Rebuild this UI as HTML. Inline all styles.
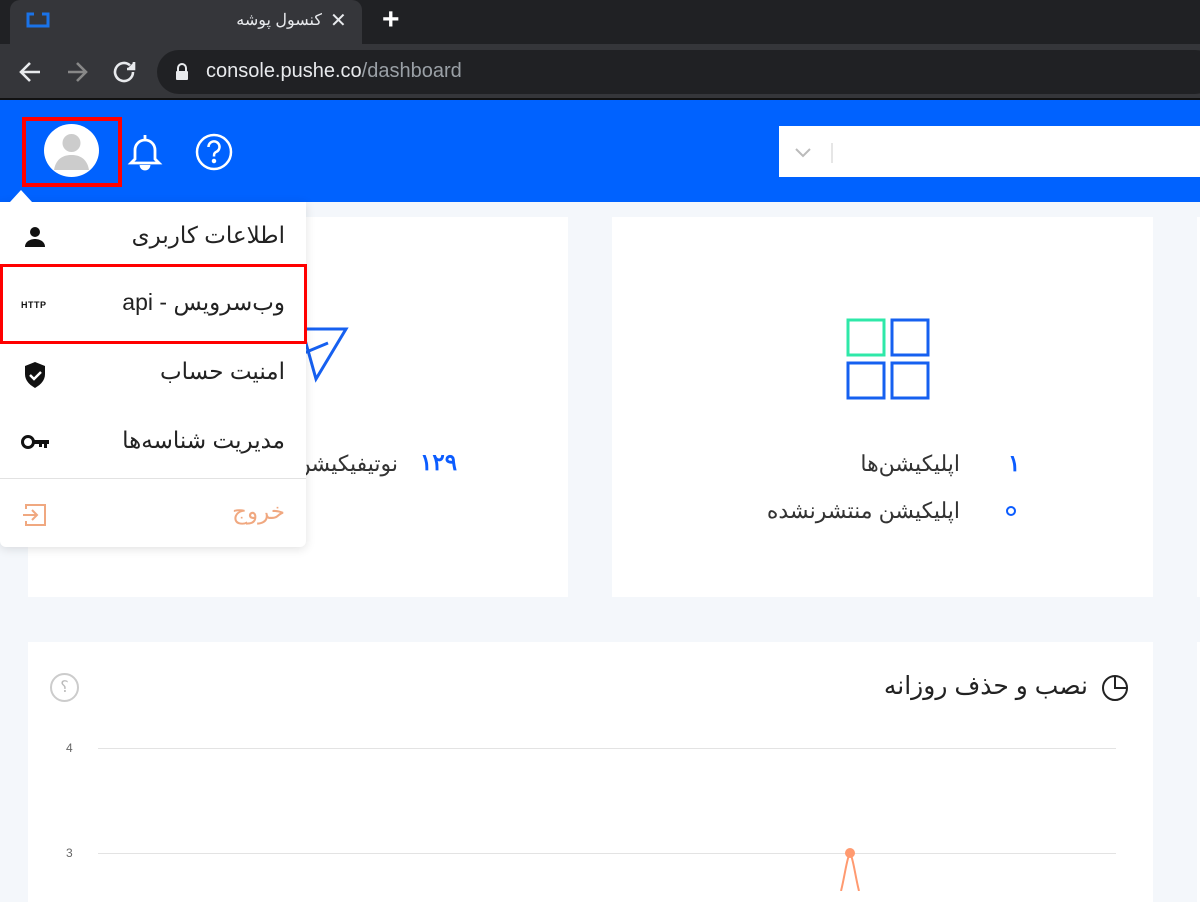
<!DOCTYPE html>
<html><head><meta charset="utf-8"><style>
*{margin:0;padding:0;box-sizing:border-box}
body{width:1200px;height:891px;overflow:hidden;background:#f4f7fb;font-family:"Liberation Sans","Noto Sans CJK SC",sans-serif;position:relative}
.abs{position:absolute}
.fa{font-family:"Liberation Sans","Noto Sans CJK SC",sans-serif;direction:rtl;white-space:nowrap}
</style></head><body>
<div class="abs" style="left:0;top:0;width:1200px;height:44px;background:#202124"></div>
<div class="abs" style="left:10px;top:0;width:352px;height:44px;background:#35363a;border-radius:10px 10px 0 0"></div>
<svg class="abs" style="left:26px;top:12px" width="24" height="16"><rect x="2" y="2" width="20" height="12" fill="none" stroke="#1a73e8" stroke-width="3"/><rect x="8" y="0" width="8" height="4" fill="#35363a"/></svg>
<div class="abs fa" style="left:200px;top:10px;width:122px;text-align:right;color:#e8eaed;font-size:16px">کنسول پوشه</div>
<div class="abs" style="left:330px;top:8px;color:#e8eaed;font-size:20px">✕</div>
<div class="abs" style="left:382px;top:3px;color:#fff;font-size:30px;font-weight:bold">+</div>
<div class="abs" style="left:0;top:44px;width:1200px;height:55px;background:#35363a"></div>
<div class="abs" style="left:0;top:98px;width:1200px;height:2px;background:#111"></div>
<svg class="abs" style="left:18px;top:60px" width="120" height="24" fill="none" stroke-width="2.6"><path d="M22 12H4M12 3L3 12l9 9" stroke="#e8eaed"/><path d="M68 12H50M59 3l9 9-9 9" stroke="#888"/><path d="M115 12a9 9 0 1 1-3-6.7" stroke="#e8eaed"/><path d="M116 2v7h-7" stroke="#e8eaed" fill="#e8eaed"/></svg>
<div class="abs" style="left:157px;top:50px;width:1060px;height:44px;background:#202124;border-radius:22px"></div>
<svg class="abs" style="left:175px;top:63px" width="14" height="18"><path d="M3 8V5a4 4 0 0 1 8 0v3" fill="none" stroke="#e8eaed" stroke-width="2"/><rect x="1" y="8" width="12" height="9" fill="#e8eaed" rx="1"/></svg>
<div class="abs" style="left:206px;top:60px;font-size:20px;color:#e8eaed">console.pushe.co<span style="color:#9aa0a6">/dashboard</span></div>
<div class="abs" style="left:0;top:100px;width:1200px;height:102px;background:#0062ff"></div>
<div class="abs" style="left:779px;top:126px;width:421px;height:51px;background:#fff"></div>
<svg class="abs" style="left:794px;top:143px" width="40" height="20"><path d="M2 6l7 7 7-7" fill="none" stroke="#bbb" stroke-width="2"/><path d="M38 0v20" stroke="#ccc"/></svg>
<div class="abs" style="left:22px;top:117px;width:100px;height:70px;border:4px solid #ff0000"></div>
<div class="abs" style="left:44px;top:124px;width:55px;height:53px;border-radius:50%;background:#fff;overflow:hidden"><svg width="55" height="53"><circle cx="27.5" cy="19" r="9" fill="#ccc"/><path d="M10 46c2-12 10-15 17.5-15S43 34 45 46z" fill="#ccc"/></svg></div>
<svg class="abs" style="left:126px;top:132px" width="38" height="40" fill="none" stroke="#fff" stroke-width="2.8"><path d="M19 3v4M9 27V18a10 10 0 0 1 20 0v9l4 4H5z"/><path d="M15 33a4 4 0 0 0 8 0" fill="#fff"/></svg>
<svg class="abs" style="left:194px;top:132px" width="40" height="40" fill="none" stroke="#fff" stroke-width="2.5"><circle cx="20" cy="20" r="17"/><path d="M14.5 15a5.5 5.5 0 1 1 7.5 5c-2 1-2 2.5-2 4.5"/><circle cx="20" cy="29" r="1" fill="#fff"/></svg>
<div class="abs" style="left:28px;top:217px;width:540px;height:380px;background:#fff"></div>
<div class="abs" style="left:612px;top:217px;width:541px;height:380px;background:#fff"></div>
<div class="abs" style="left:1197px;top:217px;width:10px;height:380px;background:#fff"></div>
<div class="abs" style="left:28px;top:642px;width:1125px;height:260px;background:#fff"></div>
<div class="abs" style="left:1197px;top:642px;width:10px;height:260px;background:#fff"></div>
<svg class="abs" style="left:846px;top:318px" width="84" height="82" fill="none" stroke-width="3"><rect x="2" y="2" width="36" height="35" stroke="#2ee8a8"/><rect x="46" y="2" width="36" height="35" stroke="#1660f0"/><rect x="2" y="45" width="36" height="35" stroke="#1660f0"/><rect x="46" y="45" width="36" height="35" stroke="#1660f0"/></svg>
<div class="abs fa" style="left:700px;top:451px;width:260px;text-align:right;font-size:22px;color:#333">اپلیکیشن‌ها</div>
<div class="abs" style="left:1008px;top:450px;font-size:23px;color:#0b5cff;font-weight:bold">۱</div>
<div class="abs fa" style="left:660px;top:498px;width:300px;text-align:right;font-size:22px;color:#333">اپلیکیشن منتشرنشده</div>
<div class="abs" style="left:1006px;top:506px;width:10px;height:10px;border:2.5px solid #0b5cff;border-radius:50%"></div>
<svg class="abs" style="left:300px;top:325px" width="50" height="58" fill="none" stroke="#1660f0" stroke-width="3"><path d="M2 4h44L16 54z"/><path d="M4 28l24-10"/></svg>
<div class="abs fa" style="left:230px;top:451px;width:168px;text-align:right;font-size:22px;color:#333">نوتیفیکیشن</div>
<div class="abs" style="left:420px;top:449px;font-size:23px;color:#0b5cff;font-weight:bold">۱۲۹</div>
<svg class="abs" style="left:1100px;top:672px" width="32" height="30" fill="none" stroke="#222" stroke-width="2"><circle cx="15" cy="16" r="12"/><path d="M15 4v12h12" /></svg>
<div class="abs fa" style="left:780px;top:671px;width:308px;text-align:right;font-size:25px;color:#222">نصب و حذف روزانه</div>
<div class="abs" style="left:50px;top:673px;width:29px;height:29px;border:2px solid #ccc;border-radius:50%;color:#bbb;font-size:16px;text-align:center;line-height:25px">؟</div>
<div class="abs" style="left:66px;top:741px;font-size:12px;color:#666">4</div>
<div class="abs" style="left:98px;top:748px;width:1018px;height:1px;background:#e3e3e3"></div>
<div class="abs" style="left:66px;top:846px;font-size:12px;color:#666">3</div>
<div class="abs" style="left:98px;top:853px;width:1018px;height:1px;background:#e3e3e3"></div>
<svg class="abs" style="left:835px;top:845px" width="30" height="46" fill="none" stroke="#ff9a70" stroke-width="2"><path d="M6 46C10 30 12 12 15 8c3 4 5 22 9 38"/><circle cx="15" cy="8" r="5" fill="#ff9a70" stroke="none"/></svg>
<div class="abs" style="left:0;top:202px;width:306px;height:345px;background:#fff;border-radius:0 0 6px 6px;box-shadow:0 2px 10px rgba(0,0,0,.12)"></div>
<div class="abs" style="left:10px;top:190px;width:0;height:0;border-left:11px solid transparent;border-right:11px solid transparent;border-bottom:12px solid #fff"></div>
<div class="abs fa" style="left:60px;top:222px;width:225px;text-align:right;font-size:23px;color:#222">اطلاعات کاربری</div>
<svg class="abs" style="left:24px;top:226px" width="22" height="22"><circle cx="11" cy="6" r="5" fill="#111"/><path d="M1 21c0-6 6-8 10-8s10 2 10 8z" fill="#111"/></svg>
<div class="abs" style="left:0;top:264px;width:307px;height:80px;border:3px solid #ff0000"></div>
<div class="abs fa" style="left:60px;top:289px;width:225px;text-align:right;font-size:23px;color:#222">وب‌سرویس - api</div>
<div class="abs" style="left:21px;top:300px;font-size:9px;font-weight:bold;color:#111;letter-spacing:.5px">HTTP</div>
<div class="abs fa" style="left:60px;top:358px;width:225px;text-align:right;font-size:23px;color:#222">امنیت حساب</div>
<svg class="abs" style="left:23px;top:361px" width="24" height="28"><path d="M12 1L2 5v8c0 7 5 11 10 14 5-3 10-7 10-14V5z" fill="#111"/><path d="M7 14l4 4 7-7" fill="none" stroke="#fff" stroke-width="2.4"/></svg>
<div class="abs fa" style="left:60px;top:427px;width:225px;text-align:right;font-size:23px;color:#222">مدیریت شناسه‌ها</div>
<svg class="abs" style="left:21px;top:433px" width="30" height="18"><circle cx="7" cy="9" r="5.5" fill="none" stroke="#111" stroke-width="3"/><path d="M12 7h16v4h-2v4h-3v-4h-2v3h-3v-3h-6z" fill="#111"/></svg>
<div class="abs" style="left:0;top:478px;width:306px;height:1px;background:#e2e2e2"></div>
<div class="abs fa" style="left:60px;top:498px;width:225px;text-align:right;font-size:23px;color:#f0a880">خروج</div>
<svg class="abs" style="left:22px;top:502px" width="26" height="26" fill="none" stroke="#f0a880" stroke-width="2"><path d="M4 7V3h19v20H4v-4"/><path d="M1 13h13M10 8l5 5-5 5"/></svg>
</body></html>
